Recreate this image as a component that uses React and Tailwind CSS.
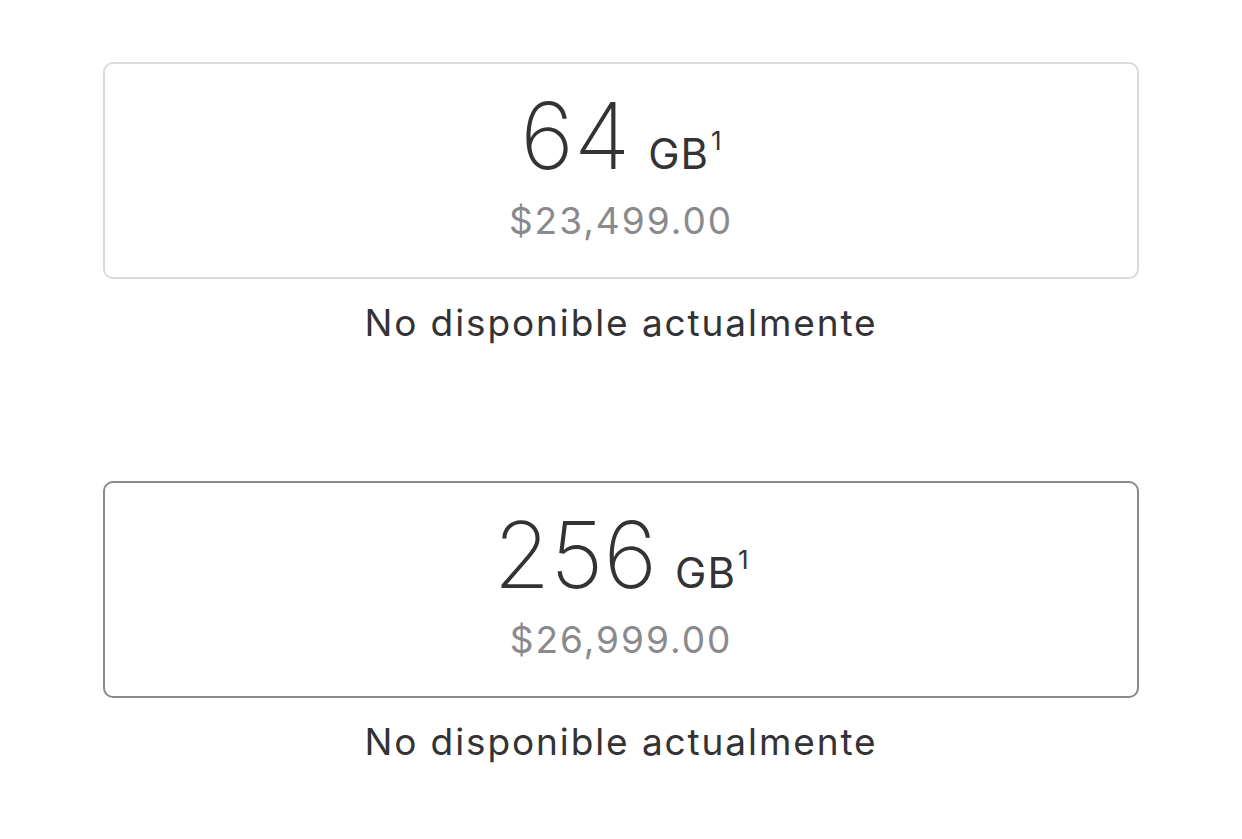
function StorageOption({ size, price, selected }) {
  return (
    <div>
      <div
        className={`h-[217px] rounded-[10px] border-2 bg-white flex flex-col items-center pt-[26px] ${
          selected ? 'border-[#8a8a8a]' : 'border-[#dadada]'
        }`}
      >
        <div className="flex items-baseline text-[#333336]">
          <span className="text-[92px] leading-none font-extralight">{size}</span>
          <span className="text-[42px] leading-none ml-[18px] tracking-[1px]">GB</span>
          <sup className="text-[26px] leading-none self-start mt-[38px] ml-[2px] top-0">1</sup>
        </div>
        <p className="mt-[20px] text-[37px] leading-none text-[#8a8a8e] tracking-[2px]">{price}</p>
      </div>
      <p className="mt-[25px] text-center text-[37px] leading-none text-[#333336] tracking-[1.9px]">
        No disponible actualmente
      </p>
    </div>
  )
}

export default function App() {
  return (
    <div
      className="w-full h-[839px] bg-white px-[103px] pt-[62px] overflow-hidden"
      style={{ fontFamily: 'Inter, "Noto Sans", sans-serif' }}
    >
      <div className="flex flex-col gap-[140px]">
        <StorageOption size="64" price="$23,499.00" />
        <StorageOption size="256" price="$26,999.00" selected />
      </div>
    </div>
  )
}
